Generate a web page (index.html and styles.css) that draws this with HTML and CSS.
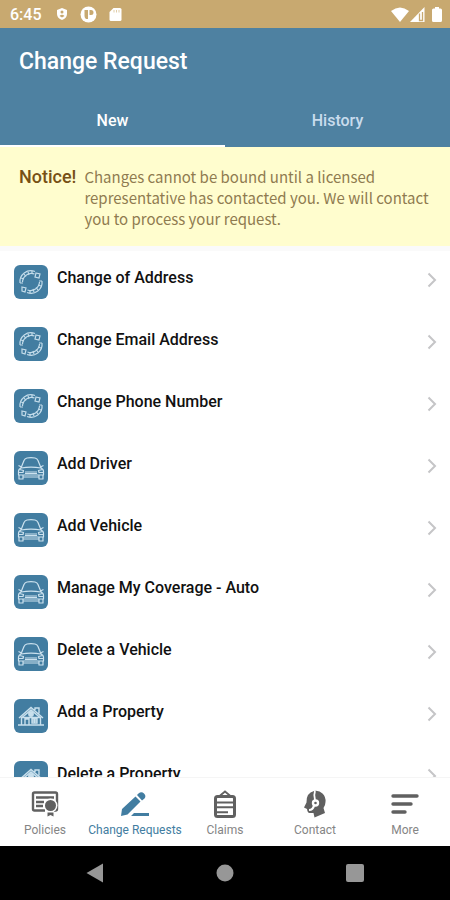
FILE: index.html
```html
<!DOCTYPE html>
<html lang="en">
<head>
<meta charset="utf-8">
<meta name="viewport" content="width=device-width, initial-scale=1">
<title>Change Request</title>
<link rel="stylesheet" href="styles.css">
</head>
<body>
<svg class="sprite" aria-hidden="true">
  <symbol id="cycle" viewBox="0 0 34 34">
    <g fill="none" stroke="#c3dcea" stroke-width="1.200">
      <path d="M6 18a11 11 0 0 1 15-11.500M8.500 17a9 9 0 0 1 12-8M28 16a11 11 0 0 1-15 11.500M25.500 17a9 9 0 0 1-12 8"/>
      <path d="M7 13l3 1M10 9l2 2.500M14 7l1 3M18 6v3M27 21l-3-1M24 25l-2-2.500M20 27l-1-3M16 28v-3M6 18h3M28 16h-3"/>
      <path d="M22 8l4 1-1 4-4-1zM8 22l4 1-1 4-3-1z"/>
    </g>
  </symbol>
  <symbol id="car" viewBox="0 0 34 34">
    <g fill="none" stroke="#cbe1ee" stroke-width="1.200" stroke-linejoin="round">
      <path d="M7 17l3-7.500q.8-2 3-2.500 4-.8 8 0 2.200.5 3 2.500l3 7.500q-10-1.800-20 0z"/>
      <path d="M4.500 14.500l3 1.500M29.500 14.500l-3 1.500M7 17q-2.500 1-2.500 3.500V24h25v-3.500Q29.500 18 27 17"/>
      <path d="M5.500 18.500l4 1-.5 2H5M28.500 18.500l-4 1 .5 2h4M11 21h12M11 22.500h12M5 24v4h4v-4M25 24v4h4v-4M9 26h16"/>
    </g>
  </symbol>
  <symbol id="house" viewBox="0 0 34 34">
    <g fill="none" stroke="#c9e0ed" stroke-width="1.400">
      <path d="M5 19L17 8.500 29 19M8 18.500L17 11l9 7.500M21 11V9h4v5.500M7.500 18v8M26.500 18v8M4 26h26"/>
      <path d="M11 26v-6h4v6M18 20h5v4h-5zM20.500 20v4M18 22h5M8 18.500h18"/>
      <circle cx="17" cy="15" r="2.200" fill="#c9e0ed"/>
    </g>
  </symbol>
  <symbol id="chevron" viewBox="0 0 10 16">
    <path d="M1.500 1.500L8 8l-6.500 6.500" fill="none" stroke="#c5c5c7" stroke-width="2"/>
  </symbol>
</svg>

<div class="app">
  <div class="status">
    <span class="time">6:45</span>
    <svg width="12" height="14" viewBox="0 0 12 14"><path d="M6 1l5 2v4c0 3-2 5-5 6-3-1-5-3-5-6V3z" fill="#fff"/><circle cx="6" cy="5" r="1.500" fill="#c8a970"/><path d="M3.500 9q2.500-2.500 5 0L6 10.500z" fill="#c8a970"/></svg>
    <svg width="17" height="17" viewBox="0 0 17 17"><circle cx="8.500" cy="8.500" r="8" fill="#fff"/><path d="M4.500 4H8v9H6q-1.500-1-1.500-3zM9.500 4H11a2.500 2.500 0 0 1 0 5H9.500z" fill="#c8a970"/></svg>
    <svg width="13" height="15" viewBox="0 0 13 15"><path d="M4.500 1H11q1.500 0 1.500 1.500v10q0 1.500-1.500 1.500H2Q.5 14 .5 12.500V5z" fill="#fff"/><path d="M5 3v2.500M7.500 3v2.500M10 3v2.500" stroke="#e0cda9"/></svg>
    <span class="signals">
      <svg width="18" height="15" viewBox="0 0 18 15"><path d="M0 4q9-7 18 0L9 15z" fill="#fff"/></svg>
      <svg width="15" height="15" viewBox="0 0 15 15"><path d="M14.500 0v15H0z" fill="#fff"/><path d="M9.500 6.500v7h3V5" fill="none" stroke="#c8a970" stroke-width="1.300"/></svg>
      <svg class="battery" width="10" height="15" viewBox="0 0 10 15"><path d="M3 0h4v1.500h1.500Q10 1.500 10 3v10.500Q10 15 8.500 15h-7Q0 15 0 13.500V3q0-1.500 1.500-1.500H3z" fill="#fff"/></svg>
    </span>
  </div>

  <header class="header">
    <h1>Change Request</h1>
    <div class="tabs" role="tablist">
      <button class="tab selected" role="tab" aria-selected="true">New</button>
      <button class="tab" role="tab" aria-selected="false">History</button>
    </div>
  </header>

  <section class="notice">
    <strong>Notice!</strong>
    <p>Changes cannot be bound until a licensed representative has contacted you. We will contact you to process your request.</p>
  </section>

  <main class="list">
    <a class="row" href="#"><svg class="tile"><use href="#cycle"/></svg><span class="label">Change of Address</span><svg class="chevron"><use href="#chevron"/></svg></a>
    <a class="row" href="#"><svg class="tile"><use href="#cycle"/></svg><span class="label">Change Email Address</span><svg class="chevron"><use href="#chevron"/></svg></a>
    <a class="row" href="#"><svg class="tile"><use href="#cycle"/></svg><span class="label">Change Phone Number</span><svg class="chevron"><use href="#chevron"/></svg></a>
    <a class="row" href="#"><svg class="tile"><use href="#car"/></svg><span class="label">Add Driver</span><svg class="chevron"><use href="#chevron"/></svg></a>
    <a class="row" href="#"><svg class="tile"><use href="#car"/></svg><span class="label">Add Vehicle</span><svg class="chevron"><use href="#chevron"/></svg></a>
    <a class="row" href="#"><svg class="tile"><use href="#car"/></svg><span class="label">Manage My Coverage - Auto</span><svg class="chevron"><use href="#chevron"/></svg></a>
    <a class="row" href="#"><svg class="tile"><use href="#car"/></svg><span class="label">Delete a Vehicle</span><svg class="chevron"><use href="#chevron"/></svg></a>
    <a class="row" href="#"><svg class="tile"><use href="#house"/></svg><span class="label">Add a Property</span><svg class="chevron"><use href="#chevron"/></svg></a>
    <a class="row" href="#"><svg class="tile"><use href="#house"/></svg><span class="label">Delete a Property</span><svg class="chevron"><use href="#chevron"/></svg></a>
  </main>

  <nav class="bottom">
    <a href="#">
      <svg viewBox="0 0 28 28"><path d="M14 20.500H3.500q-1.500 0-1.500-1.500V4q0-1.500 1.500-1.500h21Q26 2.500 26 4v15q0 1.500-1.500 1.500H23M5 7.500h18M5 12h8M5 16h7" fill="none" stroke="currentColor" stroke-width="2.400"/><circle cx="19.500" cy="15.500" r="7" fill="#fff"/><circle cx="19.500" cy="15.500" r="5.500" fill="currentColor"/><path d="M16.500 22.500v4l3-1.500 3 1.500v-4z" fill="currentColor"/></svg>
      <span>Policies</span>
    </a>
    <a class="active" href="#">
      <svg viewBox="0 0 28 28"><path d="M0 26l1-7L14.500 6.500l5 5L6.500 24.500zM16 5l1.500-1.500Q20.500 1 23 3.500t.5 5L21 10.500zM10 26l3-3h15v3z" fill="currentColor"/></svg>
      <span>Change Requests</span>
    </a>
    <a href="#">
      <svg viewBox="0 0 28 28"><path d="M8 6.500l6-5 6 5" fill="none" stroke="currentColor" stroke-width="1.800"/><rect x="4.500" y="6.500" width="19" height="20" rx="2" fill="none" stroke="currentColor" stroke-width="3"/><path d="M8.500 5h11v3h-11z" fill="currentColor"/><path d="M5 12.500h18M5 17.300h18M5 22.200h12" stroke="currentColor" stroke-width="2"/></svg>
      <span>Claims</span>
    </a>
    <a href="#">
      <svg viewBox="0 0 28 28"><path d="M13 1q5-1 8.500 2.500t3 8.500q0 3-2 6l1.500 5-10.500 4.500-1-4.500H8.500Q6.500 23 6 19l-3-1.500 2.500-5Q5 3 13 1z" fill="currentColor"/><path d="M14 1q-1.500 4 0 9" fill="none" stroke="#fff" stroke-width="1.800"/><circle cx="14.500" cy="13" r="2.500" fill="currentColor" stroke="#fff" stroke-width="2.400"/><path d="M13 15.500q-1 4.500-5 4.500" fill="none" stroke="#fff" stroke-width="2.200"/></svg>
      <span>Contact</span>
    </a>
    <a href="#">
      <svg viewBox="0 0 28 28"><path d="M2 6h24M2 14h18M2 22h12" stroke="currentColor" stroke-width="3.400" stroke-linecap="round"/></svg>
      <span>More</span>
    </a>
  </nav>

  <div class="system">
    <button aria-label="Back"><svg viewBox="0 0 20 20"><path d="M1.500 10L18 .5v19z" fill="#979797"/></svg></button>
    <button aria-label="Home"><svg viewBox="0 0 20 20"><circle cx="10" cy="10" r="8.500" fill="#979797"/></svg></button>
    <button aria-label="Recent apps"><svg viewBox="0 0 20 20"><rect x="1" y="1" width="18" height="18" rx="2" fill="#979797"/></svg></button>
  </div>
</div>
</body>
</html>
```
FILE: styles.css
```css
* {
  box-sizing: border-box;
}

body {
  margin: 0;
  font-family: Roboto, "Liberation Sans", sans-serif;
  background: #fff;
}

.sprite {
  display: none;
}

a {
  color: inherit;
  text-decoration: none;
}

button {
  border: 0;
  padding: 0;
  background: none;
  font: inherit;
  color: inherit;
}

.app {
  display: flex;
  flex-direction: column;
  height: 100vh;
}

.status {
  display: flex;
  align-items: center;
  gap: 12px;
  height: 28px;
  padding: 0 8px 0 10px;
  background: #c8a970;
  color: #fff;
}

.time {
  font-size: 16px;
  font-weight: 500;
  margin-right: 2px;
}

.signals {
  display: flex;
  gap: 1px;
  margin-left: auto;
}

.battery {
  margin-left: 6px;
}

.header {
  background: #4e81a1;
  color: #fff;
}

h1 {
  margin: 0;
  padding: 18px 19px 16px;
  font-size: 23px;
  line-height: 32px;
  font-weight: 500;
}

.tabs {
  display: grid;
  grid-template-columns: 1fr 1fr;
}

.tab {
  height: 53px;
  padding-top: 1px;
  border-bottom: 2px solid #4e81a1;
  font-size: 16px;
  font-weight: 500;
  color: #c9dced;
}

.tab.selected {
  color: #fff;
  border-bottom-color: #fff;
}

.notice {
  display: flex;
  gap: 8px;
  padding: 19px 19px 17px;
  background: #fffdce;
  border-bottom: 5px solid #fafafa;
  line-height: 21px;
}

.notice strong {
  font-size: 18px;
  font-weight: 500;
  color: #775015;
}

.notice p {
  margin: 0;
  font-family: "Noto Sans CJK SC", "Open Sans", sans-serif;
  font-size: 15px;
  color: #8f7b50;
}

.list {
  flex: 1;
  min-height: 0;
  overflow: hidden;
}

.row {
  display: flex;
  align-items: center;
  height: 62px;
  padding: 0 13px 0 14px;
}

.tile {
  width: 34px;
  height: 34px;
  border-radius: 6px;
  background: #427da1;
}

.label {
  flex: 1;
  padding: 0 0 10px 9px;
  font-size: 16px;
  font-weight: 500;
  color: #111;
}

.chevron {
  width: 10px;
  height: 16px;
  margin-bottom: 4px;
}

.bottom {
  display: grid;
  grid-template-columns: repeat(5, minmax(0, 1fr));
  height: 69px;
  padding-top: 12px;
  border-top: 1px solid #f5f5f5;
  background: #fff;
  color: #606060;
}

.bottom a {
  display: flex;
  flex-direction: column;
  align-items: center;
  gap: 4px;
  white-space: nowrap;
  font-size: 12px;
  line-height: 16px;
}

.bottom svg {
  width: 28px;
  height: 28px;
}

.bottom span {
  color: #858585;
}

.bottom .active,
.bottom .active span {
  color: #427da1;
}

.system {
  display: grid;
  grid-template-columns: repeat(3, 1fr);
  align-items: center;
  height: 54px;
  padding: 0 30px;
  background: #000;
}

.system button {
  display: flex;
  justify-content: center;
}

.system svg {
  width: 20px;
  height: 20px;
}
```
